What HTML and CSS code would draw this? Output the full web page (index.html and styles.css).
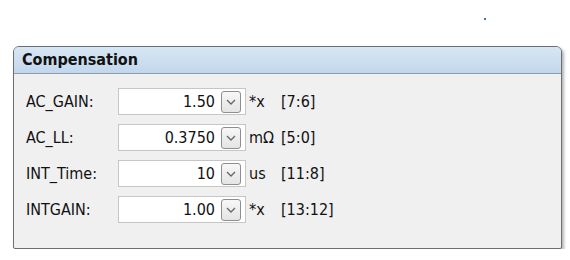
FILE: index.html
```html
<!DOCTYPE html>
<html lang="en">
<head>
    <meta charset="UTF-8">
    <title>Compensation</title>
    <link rel="stylesheet" href="styles.css">
</head>
<body>
    <span class="marker"></span>
    <div class="panel">
        <div class="panel-header">Compensation</div>
        <div class="panel-body">
            <div class="row">
                <label class="name">AC_GAIN:</label>
                <div class="field">
                    <span class="value">1.50</span>
                    <span class="drop"><svg width="10" height="6" viewBox="0 0 10 6"><path d="M1 1 L5 5 L9 1" fill="none" stroke="#666" stroke-width="1.3"/></svg></span>
                </div>
                <span class="unit">*x</span>
                <span class="bits">[7:6]</span>
            </div>
            <div class="row">
                <label class="name">AC_LL:</label>
                <div class="field">
                    <span class="value">0.3750</span>
                    <span class="drop"><svg width="10" height="6" viewBox="0 0 10 6"><path d="M1 1 L5 5 L9 1" fill="none" stroke="#666" stroke-width="1.3"/></svg></span>
                </div>
                <span class="unit">mΩ</span>
                <span class="bits">[5:0]</span>
            </div>
            <div class="row">
                <label class="name">INT_Time:</label>
                <div class="field">
                    <span class="value">10</span>
                    <span class="drop"><svg width="10" height="6" viewBox="0 0 10 6"><path d="M1 1 L5 5 L9 1" fill="none" stroke="#666" stroke-width="1.3"/></svg></span>
                </div>
                <span class="unit">us</span>
                <span class="bits">[11:8]</span>
            </div>
            <div class="row">
                <label class="name">INTGAIN:</label>
                <div class="field">
                    <span class="value">1.00</span>
                    <span class="drop"><svg width="10" height="6" viewBox="0 0 10 6"><path d="M1 1 L5 5 L9 1" fill="none" stroke="#666" stroke-width="1.3"/></svg></span>
                </div>
                <span class="unit">*x</span>
                <span class="bits">[13:12]</span>
            </div>
        </div>
    </div>
</body>
</html>
```
FILE: styles.css
```css
body {
    margin: 0;
    background: #ffffff;
    font-family: "DejaVu Sans Condensed", "DejaVu Sans", sans-serif;
    font-size: 16px;
    color: #111;
}
.marker {
    position: absolute;
    left: 484px;
    top: 18px;
    width: 2px;
    height: 2px;
    background: #3c6cc8;
}
.panel {
    margin: 46px 0 0 13px;
    width: 547px;
    height: 201px;
    border: 1px solid #6e6e6e;
    border-radius: 6px 6px 2px 2px;
    box-shadow: 2px 2px 3px rgba(0, 0, 0, 0.3);
    background: #f0f0f0;
    overflow: hidden;
}
.panel-header {
    height: 26px;
    line-height: 26px;
    padding-left: 8px;
    font-weight: bold;
    font-size: 16px;
    background: linear-gradient(#d8e6f3, #c3d7eb);
    border-bottom: 1px solid #8c9cab;
}
.panel-body {
    padding: 14px 0 0 12px;
    display: flex;
    flex-direction: column;
    gap: 9px;
}
.row {
    display: flex;
    align-items: center;
    height: 27px;
}
.name {
    width: 92px;
}
.field {
    width: 128px;
    height: 27px;
    border: 1px solid #c6c6c6;
    background: #fff;
    display: flex;
    align-items: center;
    justify-content: flex-end;
    gap: 6px;
    padding-right: 4px;
    box-sizing: border-box;
}
.drop {
    width: 20px;
    height: 22px;
    border: 1px solid #8e8e8e;
    border-radius: 3px;
    background: linear-gradient(#f7f7f7, #e4e4e4);
    display: flex;
    align-items: center;
    justify-content: center;
    box-sizing: border-box;
}
.unit {
    width: 32px;
    padding-left: 3px;
}
```
